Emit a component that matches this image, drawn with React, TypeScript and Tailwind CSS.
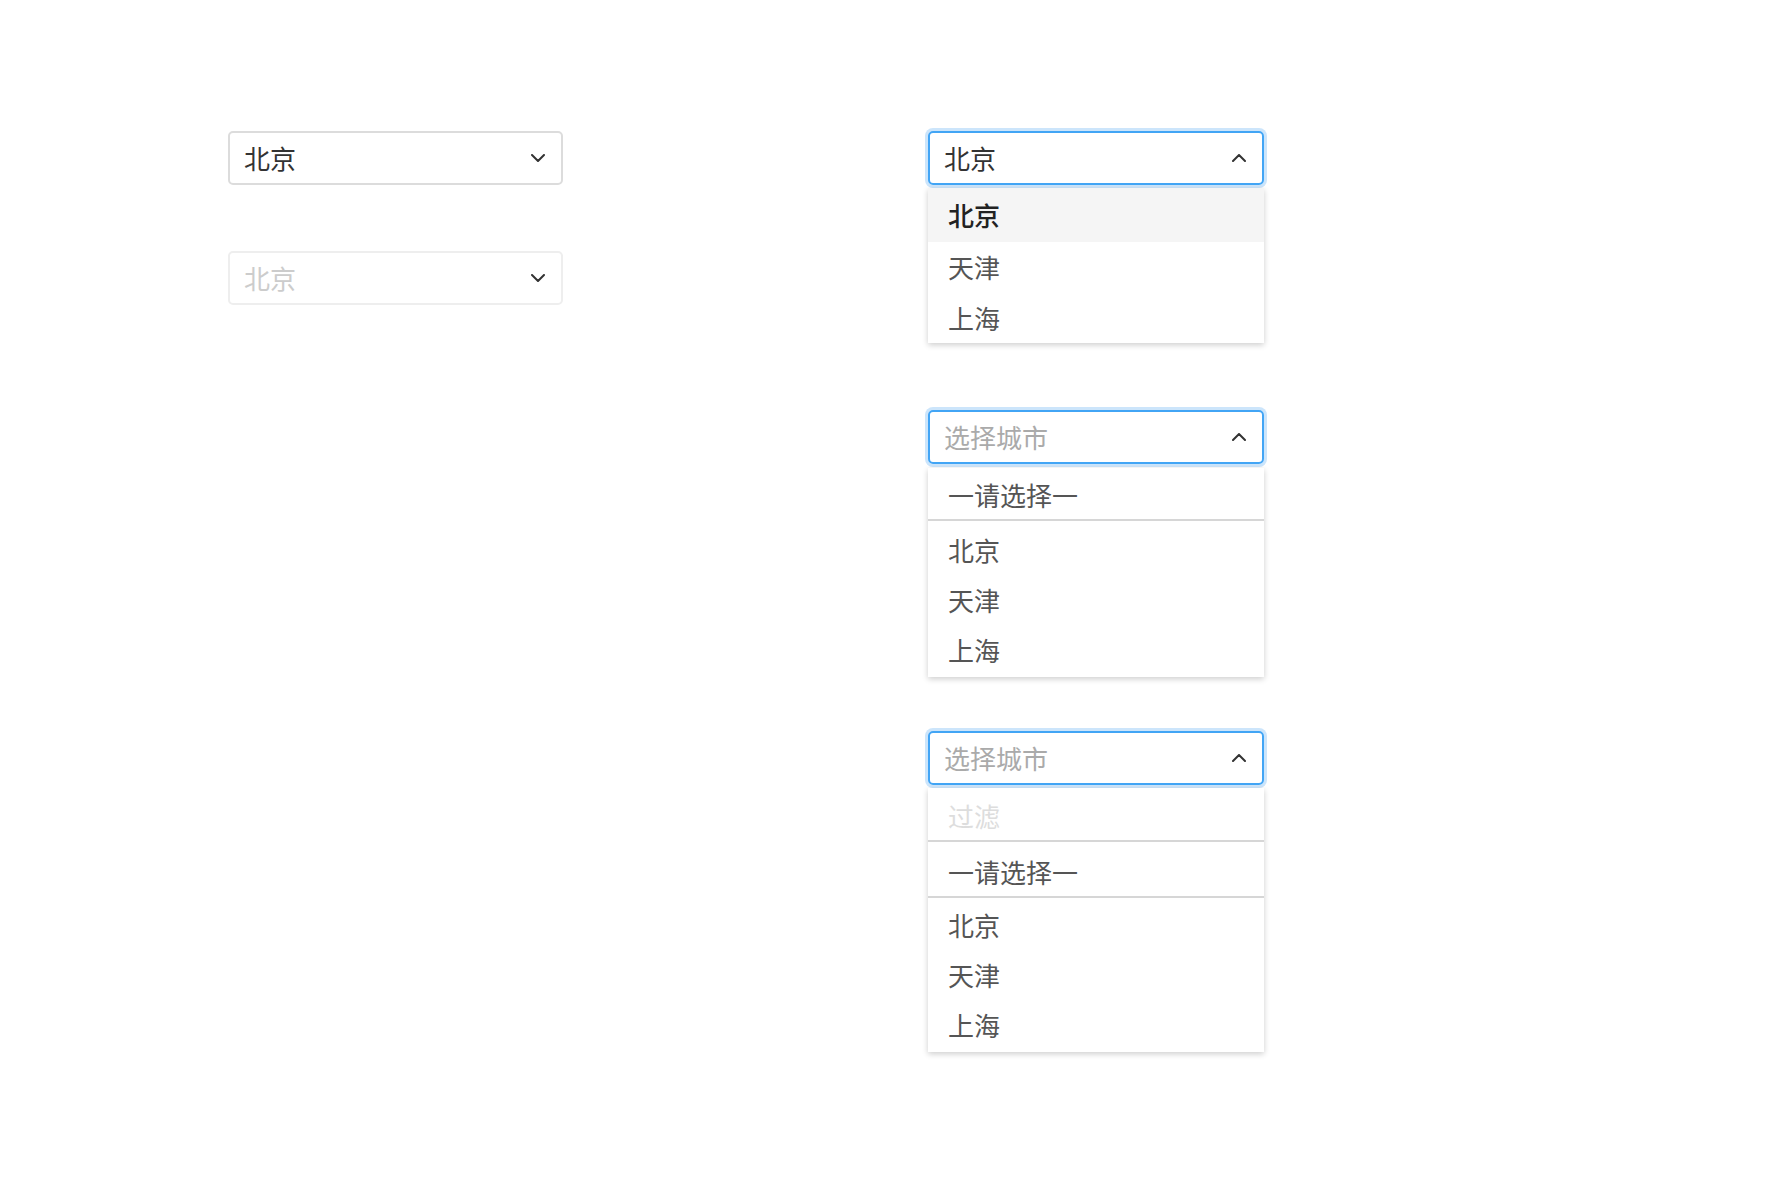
const font = { fontFamily: '"Noto Sans CJK SC", "Noto Sans", sans-serif' };

function Chevron({ up = false }: { up?: boolean }) {
  return (
    <svg className="w-[14px] h-[8px] shrink-0" viewBox="0 0 14 8" fill="none" stroke="#333" strokeWidth="2" strokeLinecap="round" strokeLinejoin="round">
      {up ? <polyline points="1,7 7,1 13,7" /> : <polyline points="1,1 7,7 13,1" />}
    </svg>
  );
}

function ClosedSelect({ value, disabled = false }: { value: string; disabled?: boolean }) {
  return (
    <div
      className={`flex items-center justify-between h-[54px] w-[335px] rounded-[5px] border-2 pl-[14px] pr-[16px] ${
        disabled ? 'border-[#eeeeee] text-[#cccccc]' : 'border-[#dcdcdc] text-[#333333]'
      }`}
    >
      <span className="text-[26px] leading-none">{value}</span>
      <Chevron />
    </div>
  );
}

function OpenSelect({ value, placeholder = false }: { value: string; placeholder?: boolean }) {
  return (
    <div className="flex items-center justify-between h-[54px] w-[336px] rounded-[5px] border-2 border-[#42a5f5] shadow-[0_0_0_3px_#cce5fb] pl-[14px] pr-[16px]">
      <span className={`text-[26px] leading-none ${placeholder ? 'text-[#aaaaaa]' : 'text-[#333333]'}`}>{value}</span>
      <Chevron up />
    </div>
  );
}

function Item({ label, active = false, className = '' }: { label: string; active?: boolean; className?: string }) {
  return (
    <div
      className={`flex items-center pl-5 text-[26px] leading-none ${
        active ? 'bg-[#f5f5f5] text-[#222222] font-medium' : 'text-[#555555]'
      } ${className}`}
    >
      {label}
    </div>
  );
}

const cities = ['北京', '天津', '上海'];

export default function App() {
  return (
    <div className="min-h-screen bg-white" style={font}>
      <div className="flex pl-[228px] pt-[131px] gap-[365px]">
        {/* left column */}
        <div className="flex flex-col gap-[66px]">
          <ClosedSelect value="北京" />
          <ClosedSelect value="北京" disabled />
        </div>

        {/* right column */}
        <div className="flex flex-col">
          {/* A */}
          <OpenSelect value="北京" />
          <div className="mt-[3px] w-[336px] bg-white shadow-[0_2px_6px_rgba(0,0,0,0.2)]">
            <Item label="北京" active className="h-[54px]" />
            <Item label="天津" className="h-[50px]" />
            <Item label="上海" className="h-[51px]" />
          </div>

          {/* B */}
          <div className="mt-[67px]">
            <OpenSelect value="选择城市" placeholder />
          </div>
          <div className="mt-[4px] w-[336px] bg-white shadow-[0_2px_6px_rgba(0,0,0,0.2)]">
            <Item label="一请选择一" className="h-[53px] pt-[2px] border-b-2 border-[#d6d6d6]" />
            <div className="pt-[4px] pb-[2px]">
              {cities.map((c) => (
                <Item key={c} label={c} className="h-[50px]" />
              ))}
            </div>
          </div>

          {/* C */}
          <div className="mt-[54px]">
            <OpenSelect value="选择城市" placeholder />
          </div>
          <div className="mt-[3px] w-[336px] bg-white shadow-[0_2px_6px_rgba(0,0,0,0.2)]">
            <div className="h-[54px] flex items-center pl-5 pt-[2px] border-b-2 border-[#d6d6d6]">
              <input
                className="w-full bg-transparent outline-none text-[26px] leading-none text-[#555] placeholder:text-[#dddddd]"
                placeholder="过滤"
                style={font}
              />
            </div>
            <Item label="一请选择一" className="h-[56px] pt-[6px] border-b-2 border-[#d6d6d6]" />
            <div className="pt-[2px] pb-[2px]">
              {cities.map((c) => (
                <Item key={c} label={c} className="h-[50px]" />
              ))}
            </div>
          </div>
        </div>
      </div>
    </div>
  );
}
